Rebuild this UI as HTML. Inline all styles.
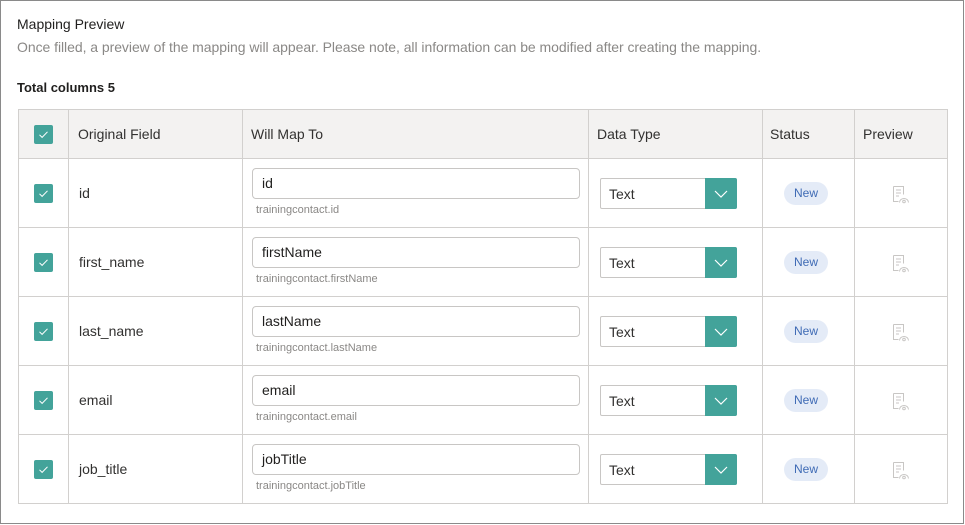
<!DOCTYPE html>
<html><head><style>
*{box-sizing:border-box;margin:0;padding:0}
body{width:965px;height:525px;background:#fff;font-family:"Segoe UI","Liberation Sans",sans-serif;position:relative;overflow:hidden;color:#323130}
.frame{position:absolute;left:0;top:0;width:964px;height:524px;border:1px solid #8a8a8a}
.a{position:absolute}
.h1{left:17px;top:16px;font-size:14px;color:#201f1e}
.sub{left:17px;top:39px;font-size:14px;color:#8a8886;letter-spacing:-0.05px}
.tot{left:17px;top:80px;font-size:13px;font-weight:bold;color:#201f1e}
.hdr{left:18px;top:109px;width:930px;height:50px;background:#f3f2f1;border:1px solid #d2d0ce}
.vl{width:1px;background:#d2d0ce}
.hl{height:1px;background:#d2d0ce;left:18px;width:930px}
.ht{font-size:14px;color:#323130;top:126px}
.cb{width:19px;height:19px;background:#43a39a;border-radius:2px}
.cb svg{display:block}
.ct{font-size:14px;color:#323130}
.inp{width:328px;height:31px;border:1px solid #c8c6c4;border-radius:4px;font-size:14px;padding:6px 0 0 9px;color:#201f1e}
.sm{font-size:11px;color:#8a8886}
.sel{width:137px;height:31px;border:1px solid #c8c6c4;border-radius:2px;font-size:14px;padding:7px 0 0 8px;color:#323130}
.sel .btn{position:absolute;right:-1px;top:-1px;width:32px;height:31px;background:#43a39a;border-radius:0 2px 2px 0}
.bd{width:44px;height:23px;border-radius:12px;background:#e4ebf7;color:#3f6bb5;font-size:12px;text-align:center;line-height:23px}
</style></head><body>
<div class="frame"></div>
<div class="a h1">Mapping Preview</div>
<div class="a sub">Once filled, a preview of the mapping will appear. Please note, all information can be modified after creating the mapping.</div>
<div class="a tot">Total columns 5</div>
<div class="a hdr"></div>
<div class="a" style="left:18px;top:158px;width:930px;height:346px;border:1px solid #d2d0ce;border-top:none"></div>
<div class="a vl" style="left:68px;top:109px;height:395px"></div>
<div class="a vl" style="left:242px;top:109px;height:395px"></div>
<div class="a vl" style="left:588px;top:109px;height:395px"></div>
<div class="a vl" style="left:762px;top:109px;height:395px"></div>
<div class="a vl" style="left:854px;top:109px;height:395px"></div>
<div class="a hl" style="top:227px"></div>
<div class="a hl" style="top:296px"></div>
<div class="a hl" style="top:365px"></div>
<div class="a hl" style="top:434px"></div>
<div class="a cb" style="left:34px;top:125px"><svg width="19" height="19"><path d="M5.5 9.8l2.6 2.6 5.4-5.6" stroke="#fff" stroke-width="1" fill="none"/></svg></div>
<div class="a ht" style="left:78px">Original Field</div>
<div class="a ht" style="left:251px">Will Map To</div>
<div class="a ht" style="left:597px">Data Type</div>
<div class="a ht" style="left:770px">Status</div>
<div class="a ht" style="left:863px">Preview</div>

<div id="rows"></div>
<script>
var r=[["id","id"],["first_name","firstName"],["last_name","lastName"],["email","email"],["job_title","jobTitle"]];
var h="";
r.forEach(function(x,i){var t=158+i*69;
h+='<div class="a cb" style="left:34px;top:'+(t+26)+'px"><svg width="19" height="19"><path d="M5.5 9.8l2.6 2.6 5.4-5.6" stroke="#fff" stroke-width="1" fill="none"/></svg></div>';
h+='<div class="a ct" style="left:79px;top:'+(t+27)+'px">'+x[0]+'</div>';
h+='<div class="a inp" style="left:252px;top:'+(t+10)+'px">'+x[1]+'</div>';
h+='<div class="a sm" style="left:256px;top:'+(t+46)+'px">trainingcontact.'+x[1]+'</div>';
h+='<div class="a sel" style="left:600px;top:'+(t+20)+'px">Text<div class="btn"><svg width="32" height="31"><path d="M10 13l6 6 6-6" stroke="#fff" stroke-width="1.2" fill="none"/></svg></div></div>';
h+='<div class="a bd" style="left:784px;top:'+(t+24)+'px">New</div>';
h+='<div class="a" style="left:892px;top:'+(t+28)+'px"><svg width="18" height="18" fill="none" stroke="#c8c6c4" stroke-width="1"><path d="M1.5 0.5h10v8M1.5 0.5v15h5"/><path d="M4 4h5M4 7h5M4 10h3"/><path d="M7.5 16.5a4.5 4 0 0 1 9 0"/><circle cx="12" cy="15.5" r="1.3"/></svg></div>';
});
document.getElementById("rows").innerHTML=h;
</script>
</body></html>
